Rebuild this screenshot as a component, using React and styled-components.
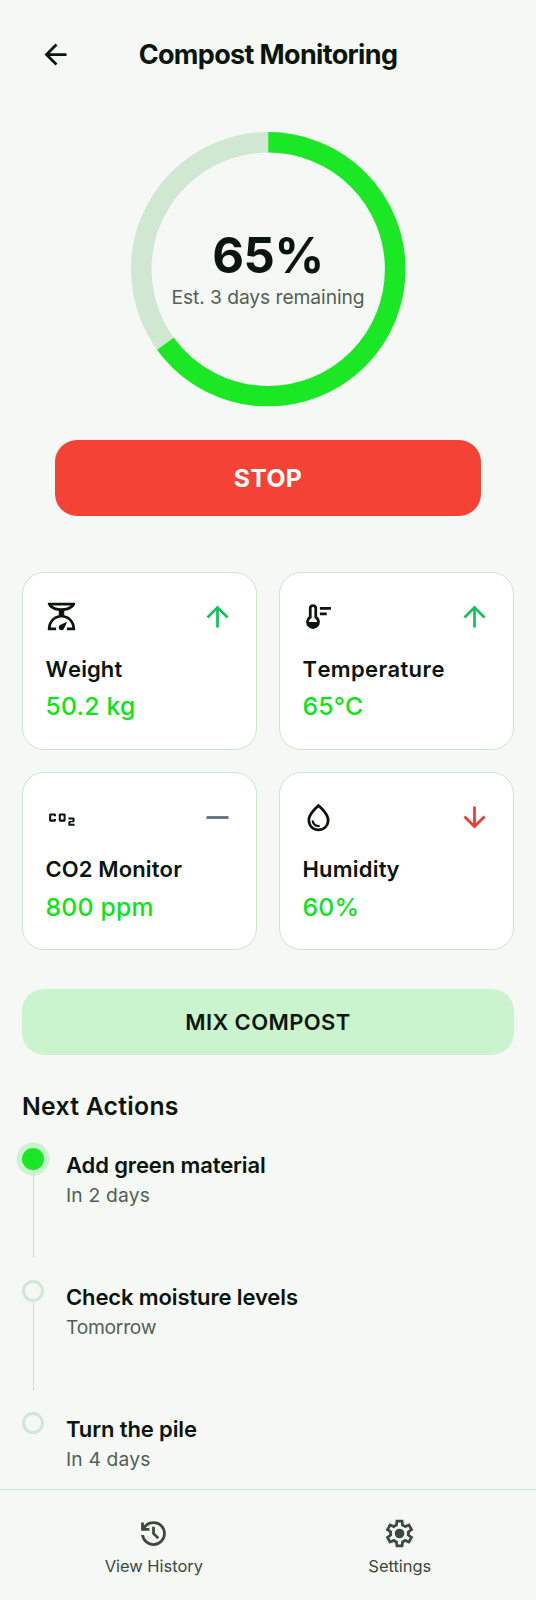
import React from "react";
import styled, { createGlobalStyle } from "styled-components";

const GlobalStyle = createGlobalStyle`
  *, *::before, *::after { box-sizing: border-box; }
  body {
    margin: 0;
    background: #f6f8f6;
    color: #0a150b;
    font-family: Inter, "Liberation Sans", sans-serif;
    -webkit-font-smoothing: antialiased;
  }
  h1, h2, h3, p { margin: 0; }
  button { font-family: inherit; border: 0; color: inherit; cursor: pointer; }
`;

const Page = styled.div`
  display: flex;
  flex-direction: column;
  height: 1600px;
  background: #f6f8f6;
`;

const Header = styled.header`
  display: flex;
  align-items: center;
  height: 109px;
  padding: 0 22px;
`;

const BackButton = styled.button`
  display: flex;
  align-items: center;
  justify-content: center;
  width: 66px;
  height: 66px;
  padding: 0;
  background: transparent;
`;

const Title = styled.h1`
  flex: 1;
  padding-right: 66px;
  text-align: center;
  font-size: 27px;
  line-height: 34px;
  font-weight: 700;
  letter-spacing: -0.66px;
`;

const Main = styled.main`
  flex: 1;
  display: flex;
  flex-direction: column;
  padding: 23px 22px 0;
`;

const Progress = styled.section`
  display: flex;
  flex-direction: column;
  align-items: center;
  gap: 33px;
  padding: 0 33px;
`;

const Ring = styled.div`
  display: grid;
  place-items: center;
  width: 274.5px;
  height: 274.5px;
  > * { grid-area: 1 / 1; }
`;

const RingText = styled.div`
  padding-top: 2px;
  text-align: center;
`;

const Percent = styled.p`
  font-size: 49px;
  line-height: 54px;
  font-weight: 700;
  letter-spacing: -0.4px;
`;

const Muted = styled.p`
  font-size: 19.25px;
  line-height: 29px;
  font-weight: 400;
  color: #526055;
  letter-spacing: ${(p) => p.$track || "0"};
`;

const StopButton = styled.button`
  width: 426px;
  height: 76.5px;
  border-radius: 22px;
  background: #f44336;
  color: #fff;
  font-size: 24.75px;
  font-weight: 700;
  letter-spacing: 0.37px;
`;

const Grid = styled.section`
  display: grid;
  grid-template-columns: 1fr 1fr;
  gap: 22.5px 22px;
  margin-top: 55.5px;
`;

const Card = styled.article`
  height: 178px;
  padding: 22px;
  border: 1px solid #cbe5ce;
  border-radius: 22px;
  background: #fff;
`;

const CardTop = styled.div`
  display: flex;
  align-items: center;
  justify-content: space-between;
  height: 44px;
  margin-bottom: 14px;
`;

const CardName = styled.h3`
  padding-left: 0.5px;
  font-size: 22px;
  line-height: 33px;
  font-weight: 600;
  font-kerning: none;
  letter-spacing: ${(p) => p.$track};
`;

const CardValue = styled.p`
  margin-top: 2.5px;
  padding-left: 0.5px;
  font-size: 24.75px;
  line-height: 37px;
  font-weight: 500;
  letter-spacing: 0.2px;
  color: #0be516;
`;

const MixButton = styled.button`
  height: 66px;
  margin-top: 39px;
  border-radius: 22px;
  background: #caf4cd;
  font-size: 22px;
  font-weight: 600;
  letter-spacing: 0.4px;
`;

const SectionTitle = styled.h2`
  margin-top: 36px;
  font-size: 24.75px;
  line-height: 31px;
  font-weight: 600;
  letter-spacing: 0.27px;
`;

const Timeline = styled.section`
  display: flex;
  flex-direction: column;
  gap: 22px;
  margin-top: 26px;
`;

const Step = styled.div`
  display: flex;
  gap: 22px;
  height: ${(p) => (p.$last ? "66px" : "110px")};
`;

const Marker = styled.div`
  display: flex;
  flex-direction: column;
  align-items: center;
  width: 22px;
`;

const Dot = styled.span`
  flex: none;
  width: 22px;
  height: 22px;
  border-radius: 50%;
  border: ${(p) => (p.$active ? "0" : "3px solid #d0e7d2")};
  background: ${(p) => (p.$active ? "#1be825" : "transparent")};
  box-shadow: ${(p) => (p.$active ? "0 0 0 5.5px #caf4cd" : "none")};
`;

const Line = styled.span`
  flex: 1;
  width: 1px;
  margin-left: 1px;
  background: #c6e2c9;
`;

const StepName = styled.h3`
  padding-top: 1px;
  font-size: 22px;
  line-height: 32px;
  font-weight: 600;
  letter-spacing: -0.12px;
`;

const Nav = styled.nav`
  display: flex;
  justify-content: space-around;
  height: 111px;
  padding: 27px 22px 0;
  border-top: 1px solid #cbe5ce;
`;

const NavItem = styled.a`
  display: flex;
  flex-direction: column;
  align-items: center;
  gap: 4px;
  color: #3a4a3d;
  font-size: 16.5px;
  line-height: 25px;
  font-weight: 400;
  letter-spacing: -0.03px;
`;

const Svg = styled.svg`
  display: block;
  flex: none;
  width: 33px;
  height: 33px;
  fill: ${(p) => p.$color || "currentColor"};
`;

const RingSvg = styled.svg`
  width: 274.5px;
  height: 274.5px;
  transform: rotate(-90deg);
  fill: none;
`;

const paths = {
  back: "M20 11H7.83l5.59-5.59L12 4l-8 8 8 8 1.41-1.41L7.83 13H20v-2z",
  up: "M4 12l1.41 1.41L11 7.83V20h2V7.83l5.58 5.59L20 12l-8-8-8 8z",
  down: "M20 12l-1.41-1.41L13 16.17V4h-2v12.17l-5.58-5.59L4 12l8 8 8-8z",
  flat: "M4 11h16v2H4z",
  scale:
    "M14 11V8c4.56-.58 8-3.1 8-6H2c0 2.9 3.44 5.42 8 6v3c-3.68.73-8 3.61-8 11h6v-2H4.13c.93-6.83 6.65-7.2 7.87-7.2s6.94.37 7.87 7.2H16v2h6c0-7.39-4.31-10.27-8-11zm4.87-7C17.5 5.19 15 6 12 6s-5.5-.81-6.87-2h13.74zM12 22c-1.1 0-2-.9-2-2 0-.55.22-1.05.59-1.41C11.39 17.79 16 16 16 16s-1.79 4.61-2.59 5.41c-.36.37-.86.59-1.41.59z",
  co2: "M14 9h-3c-.55 0-1 .45-1 1v4c0 .55.45 1 1 1h3c.55 0 1-.45 1-1v-4c0-.55-.45-1-1-1zm-.5 4.5h-2v-3h2v3zM8 13v1c0 .55-.45 1-1 1H4c-.55 0-1-.45-1-1v-4c0-.55.45-1 1-1h3c.55 0 1 .45 1 1v1H6.5v-.5h-2v3h2V13H8zM20.5 15.5h-2v1h3V18H17v-2.5c0-.55.45-1 1-1h2v-1h-3V12h3.5c.55 0 1 .45 1 1v1.5c0 .55-.45 1-1 1z",
  drop: "M12 2c-5.33 4.55-8 8.48-8 11.8 0 4.98 3.8 8.2 8 8.2s8-3.22 8-8.2c0-3.32-2.67-7.25-8-11.8zm0 18c-3.35 0-6-2.57-6-6.2 0-2.34 1.95-5.44 6-9.14 4.05 3.7 6 6.79 6 9.14 0 3.63-2.65 6.2-6 6.2zm-4.17-6c.37 0 .67.26.74.62.41 2.22 2.28 2.98 3.64 2.87.43-.02.79.32.79.75 0 .4-.32.73-.72.75-2.13.13-4.62-1.09-5.19-4.12-.08-.45.28-.87.74-.87z",
};

const symbolPaths = {
  thermostat:
    "M520-520v-80h200v80H520Zm0-160v-80h320v80H520ZM320-120q-83 0-141.5-58.5T120-320q0-48 21-89.5t59-70.5v-240q0-50 35-85t85-35q50 0 85 35t35 85v240q38 29 59 70.5t21 89.5q0 83-58.5 141.5T320-120ZM200-320h240q0-29-12.5-54T392-416l-32-24v-280q0-17-11.5-28.5T320-760q-17 0-28.5 11.5T280-720v280l-32 24q-23 17-35.5 42T200-320Z",
  history:
    "M480-120q-138 0-240.5-91.5T122-440h82q14 104 92.5 172T480-200q117 0 198.5-81.5T760-480q0-117-81.5-198.5T480-760q-69 0-129 32t-101 88h110v80H120v-240h80v94q51-64 124.5-99T480-840q75 0 140.5 28.5t114 77q48.5 48.5 77 114T840-480q0 75-28.5 140.5t-77 114q-48.5 48.5-114 77T480-120Zm112-192L440-464v-216h80v184l128 128-56 56Z",
  settings:
    "m370-80-16-128q-13-5-24.5-12T307-235l-119 50L78-375l103-78q-1-7-1-13.5v-27q0-6.5 1-13.5L78-585l110-190 119 50q11-8 23-15t24-12l16-128h220l16 128q13 5 24.5 12t22.5 15l119-50 110 190-103 78q1 7 1 13.5v27q0 6.5-2 13.5l103 78-110 190-118-50q-11 8-23 15t-24 12L590-80H370Zm70-80h79l14-106q31-8 57.5-23.5T639-327l99 41 39-68-86-65q5-14 7-29.5t2-31.5q0-16-2-31.5t-7-29.5l86-65-39-68-99 42q-22-23-48.5-38.5T533-694l-13-106h-79l-14 106q-31 8-57.5 23.5T321-633l-99-41-39 68 86 64q-5 15-7 30t-2 32q0 16 2 31t7 30l-86 65 39 68 99-42q22 23 48.5 38.5T427-266l13 106Zm42-180q58 0 99-41t41-99q0-58-41-99t-99-41q-59 0-99.5 41T342-480q0 58 40.5 99t99.5 41Z",
};

function Icon({ name, color }) {
  const symbol = symbolPaths[name];
  return (
    <Svg viewBox={symbol ? "0 -960 960 960" : "0 0 24 24"} $color={color} aria-hidden="true">
      <path d={symbol || paths[name]} />
    </Svg>
  );
}

const trends = { up: "#16c25a", down: "#ef3a3a", flat: "#5f6b80" };

const metrics = [
  { icon: "scale", trend: "up", name: "Weight", value: "50.2 kg", track: "0.1px" },
  { icon: "thermostat", trend: "up", name: "Temperature", value: "65°C", track: "0.36px" },
  { icon: "co2", trend: "flat", name: "CO2 Monitor", value: "800 ppm", track: "0.12px" },
  { icon: "drop", trend: "down", name: "Humidity", value: "60%", track: "0.2px" },
];

const steps = [
  { name: "Add green material", when: "In 2 days", active: true, track: "0.18px" },
  { name: "Check moisture levels", when: "Tomorrow", track: "-0.25px" },
  { name: "Turn the pile", when: "In 4 days", track: "0.15px" },
];

const R = 127.2;
const LENGTH = 2 * Math.PI * R;

export default function App() {
  return (
    <>
      <GlobalStyle />
      <Page>
        <Header>
          <BackButton aria-label="Back">
            <Icon name="back" />
          </BackButton>
          <Title>Compost Monitoring</Title>
        </Header>
        <Main>
          <Progress>
            <Ring>
              <RingSvg viewBox="0 0 275 275">
                <circle cx="137.5" cy="137.5" r={R} stroke="#d0e7d2" strokeWidth="20.6" />
                <circle
                  cx="137.5"
                  cy="137.5"
                  r={R}
                  stroke="#1be825"
                  strokeWidth="20.6"
                  strokeDasharray={`${LENGTH * 0.65} ${LENGTH}`}
                />
              </RingSvg>
              <RingText>
                <Percent>65%</Percent>
                <Muted $track="-0.07px">Est. 3 days remaining</Muted>
              </RingText>
            </Ring>
            <StopButton>STOP</StopButton>
          </Progress>
          <Grid>
            {metrics.map((m) => (
              <Card key={m.name}>
                <CardTop>
                  <Icon name={m.icon} />
                  <Icon name={m.trend} color={trends[m.trend]} />
                </CardTop>
                <CardName $track={m.track}>{m.name}</CardName>
                <CardValue>{m.value}</CardValue>
              </Card>
            ))}
          </Grid>
          <MixButton>MIX COMPOST</MixButton>
          <SectionTitle>Next Actions</SectionTitle>
          <Timeline>
            {steps.map((s, i) => (
              <Step key={s.name} $last={i === steps.length - 1}>
                <Marker>
                  <Dot $active={s.active} />
                  {i < steps.length - 1 && <Line />}
                </Marker>
                <div>
                  <StepName>{s.name}</StepName>
                  <Muted $track={s.track}>{s.when}</Muted>
                </div>
              </Step>
            ))}
          </Timeline>
        </Main>
        <Nav>
          <NavItem>
            <Icon name="history" />
            View History
          </NavItem>
          <NavItem>
            <Icon name="settings" />
            Settings
          </NavItem>
        </Nav>
      </Page>
    </>
  );
}
